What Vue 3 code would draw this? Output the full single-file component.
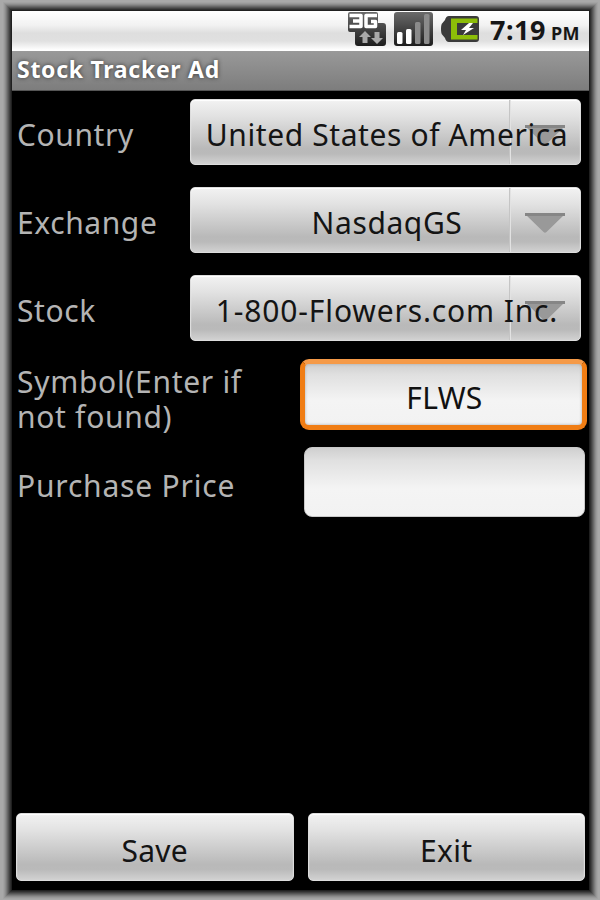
<template>
  <div class="device">
    <div class="screen">
      <header class="status-bar">
        <svg class="status-icons" width="136" height="38" viewBox="0 0 136 38">
          <defs>
            <linearGradient id="dark" x1="0" y1="0" x2="0" y2="1">
              <stop offset="0" stop-color="#6a6a6a" />
              <stop offset="1" stop-color="#1c1c1c" />
            </linearGradient>
          </defs>
          <!-- 3G data -->
          <path d="M3 1H29Q31 1 31 3V12H36Q39 12 39 15V32Q39 35 36 35H11Q8 35 8 32V21H3Q1 21 1 19V3Q1 1 3 1Z" fill="url(#dark)" />
          <path d="M2.500 4.500H14V15.500H2.500M6 10H13" fill="none" stroke="#fff" stroke-width="3.500" stroke-linejoin="round" />
          <path d="M30 4.500H19V15.500H28.500V10.500H24" fill="none" stroke="#fff" stroke-width="3.500" stroke-linejoin="round" />
          <path d="M18 20L24 26H20.500V32H15.500V26H12ZM30 33L24 27H27.500V21H32.500V27H36Z" fill="#a9a9a9" />
          <!-- signal -->
          <rect x="47" y="1" width="39" height="34" rx="3" fill="url(#dark)" />
          <rect x="50" y="21" width="5.500" height="12" rx="1.500" fill="#fff" />
          <rect x="59" y="18" width="5.500" height="15" rx="1.500" fill="#fff" />
          <rect x="68" y="11" width="5.500" height="22" rx="1.500" fill="#8b8b8b" />
          <rect x="77" y="3" width="5.500" height="30" rx="1.500" fill="#8b8b8b" />
          <!-- battery -->
          <path d="M102 5H129Q132 5 132 8V28Q132 31 129 31H102Q99 31 98 27L95.500 24Q94 23 94 18Q94 13 95.500 12L98 9Q99 5 102 5Z" fill="#3a3a3a" />
          <path d="M104 7.500H130.500V12H110V24H130.500V28.500H104Z" fill="#8cbd08" />
          <path d="M122 12L114 19H119L116 24L127 17H122L126 12Z" fill="#fff" />
        </svg>
        <span class="clock">7:19<small>PM</small></span>
      </header>
      <div class="title-bar">Stock Tracker Ad</div>

      <main class="form">
        <div v-for="item in spinners" :key="item.label" class="row">
          <span class="label">{{ item.label }}</span>
          <button type="button" class="btn spinner" :class="item.name">
            <span class="arrow-cell">
              <svg width="40" height="21" viewBox="0 0 40 21">
                <path d="M0 1H40L21.500 19Q20 20.500 18.500 19Z" fill="#999" />
                <path d="M0 0H40V3H0Z" fill="#868686" />
              </svg>
            </span>
            <span class="value">{{ item.value }}</span>
          </button>
        </div>
        <div class="row">
          <label for="symbol" class="label symbol">
            <span class="line">Symbol(Enter if</span>
            <span class="line">not found)</span>
          </label>
          <input id="symbol" v-model="symbol" class="field focused" />
        </div>
        <div class="row">
          <label for="price" class="label price">Purchase Price</label>
          <input id="price" v-model="price" class="field" />
        </div>
      </main>

      <footer class="actions">
        <button type="button" class="btn">Save</button>
        <button type="button" class="btn">Exit</button>
      </footer>
    </div>
  </div>
</template>

<script setup>
import { ref } from 'vue';

const spinners = [
  { name: 'country', label: 'Country', value: 'United States of America' },
  { name: 'exchange', label: 'Exchange', value: 'NasdaqGS' },
  { name: 'stock', label: 'Stock', value: '1-800-Flowers.com Inc.' }
];

const symbol = ref('FLWS');
const price = ref('');
</script>

<style>
body {
  margin: 0;
  background: #a9a9a9;
}
</style>

<style scoped>
.device {
  box-sizing: border-box;
  width: 600px;
  height: 900px;
  padding: 11px 11px 10px 12px;
  overflow: hidden;
  background: #a9a9a9;
  font-family: "Noto Sans", "Open Sans", sans-serif;
}

.screen {
  display: flex;
  flex-direction: column;
  height: 879px;
  background: #000;
  box-shadow: 0 0 0 1px #202020, 0 0 0 2px #303030, 0 0 0 3px #424242, 0 0 0 4px #555,
    0 0 0 5px #686868, 0 0 0 6px #7b7b7b, 0 0 0 7px #8c8c8c, 0 0 0 8px #999, 0 0 0 9px #a3a3a3;
}

.status-bar {
  display: flex;
  justify-content: flex-end;
  height: 40px;
  flex: none;
  background: linear-gradient(#fff, #f2f2f2 35%, #dedede 55%, #e0e0e0 75%, #fff 98%);
}

.status-icons {
  flex: none;
  margin-right: 7px;
}

.clock {
  width: 99px;
  color: #161616;
  font-size: 27px;
  font-weight: 700;
  letter-spacing: 0.5px;
  line-height: 38px;
  white-space: nowrap;
}

.clock small {
  margin-left: 5px;
  font-size: 18px;
  font-weight: 700;
}

.title-bar {
  flex: none;
  box-sizing: border-box;
  height: 40px;
  padding-left: 5px;
  border-bottom: 1px solid #555;
  background: linear-gradient(#999, #7d7d7d);
  color: #fff;
  font-size: 23px;
  font-weight: 700;
  letter-spacing: 0.72px;
  line-height: 37px;
  text-shadow: 0 0 4px #333;
}

.row {
  display: flex;
  justify-content: space-between;
  box-sizing: border-box;
  height: 88px;
  padding: 4px 2px 0 5px;
}

.label {
  color: #b4b4b4;
  font-size: 30px;
  letter-spacing: 0.6px;
  line-height: 35px;
  padding-top: 22px;
  white-space: nowrap;
}

.label.symbol {
  padding-top: 5px;
  letter-spacing: 0.7px;
}

.label.price {
  padding-top: 21px;
  letter-spacing: 0.8px;
}

.line {
  display: block;
}

.btn {
  padding: 0;
  border: 1px solid #ddd;
  border-radius: 5px;
  background: linear-gradient(#f2f2f2, #e2e2e2 25%, #b9b9b9 76%, #bababa 84%, #d2d2d2);
  box-shadow: inset 0 1px 1px #fff;
  color: #141414;
  font-family: inherit;
  font-size: 30px;
  letter-spacing: 0.6px;
}

.spinner {
  display: grid;
  grid-template-columns: 318px 71px;
  width: 391px;
  height: 66px;
  margin: 4px 6px 0 0;
}

.spinner.stock {
  letter-spacing: 0.85px;
}

.arrow-cell {
  grid-area: 1 / 2;
  box-sizing: border-box;
  height: 64px;
  padding: 25px 0 0 15px;
  border-left: 1px solid #c5c5c5;
  box-shadow: inset 1px 0 #e2e2e2;
  text-align: left;
  line-height: 0;
}

.value {
  grid-area: 1 / 1 / 2 / 3;
  z-index: 1;
  padding-left: 3px;
  line-height: 69px;
  white-space: nowrap;
}

.field {
  box-sizing: border-box;
  width: 281px;
  height: 70px;
  margin-right: 2px;
  padding: 4px 0 0;
  border: 1px solid #c9c9c9;
  border-radius: 8px;
  outline: none;
  background: linear-gradient(#cfcfcf, #e0e0e0 18%, #f4f4f4 60%, #f2f2f2);
  color: #111;
  font-family: inherit;
  font-size: 30px;
  letter-spacing: 0.3px;
  text-align: center;
}

.focused {
  width: 287px;
  height: 71px;
  margin-right: 0;
  padding: 6px 0 0 2px;
  border: 5px solid #f07d14;
  border-top-color: #f59a48;
  border-radius: 9px;
  box-shadow: inset 0 0 3px #aaa;
}

.actions {
  display: flex;
  gap: 14px;
  margin-top: auto;
  padding: 0 4px 9px;
}

.actions .btn {
  width: 278px;
  height: 68px;
  padding-top: 6px;
  letter-spacing: 0.3px;
}
</style>
